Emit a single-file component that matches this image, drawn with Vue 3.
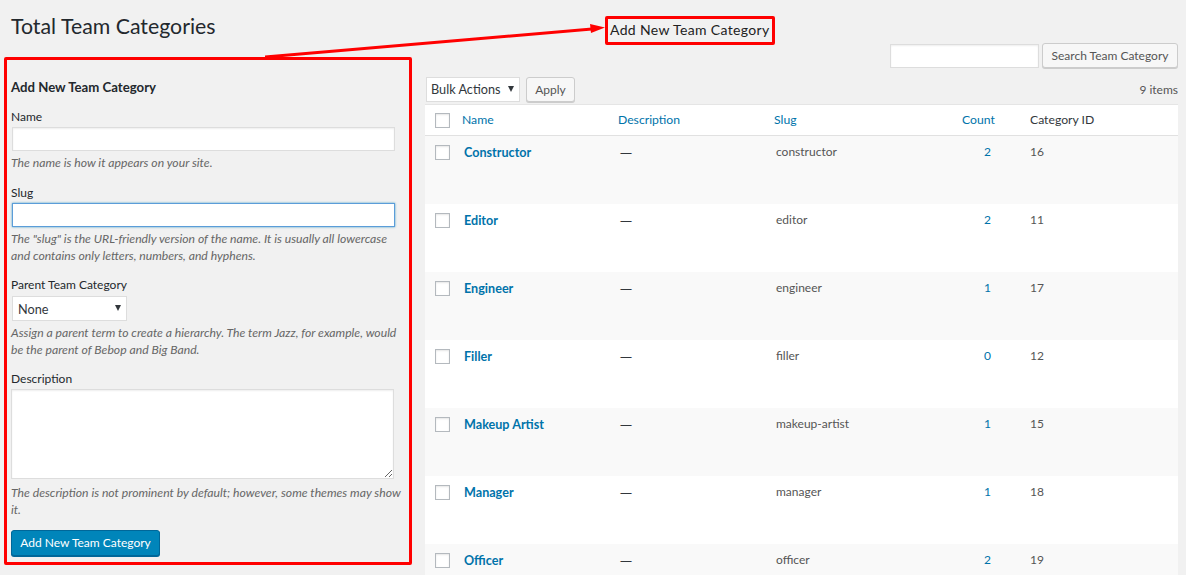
<script setup>
const terms = [
  { name: 'Constructor', slug: 'constructor', count: 2, id: 16 },
  { name: 'Editor', slug: 'editor', count: 2, id: 11 },
  { name: 'Engineer', slug: 'engineer', count: 1, id: 17 },
  { name: 'Filler', slug: 'filler', count: 0, id: 12 },
  { name: 'Makeup Artist', slug: 'makeup-artist', count: 1, id: 15 },
  { name: 'Manager', slug: 'manager', count: 1, id: 18 },
  { name: 'Officer', slug: 'officer', count: 2, id: 19 }
];
</script>

<template>
  <div class="wrap">
    <h1>Total Team Categories</h1>

    <div class="columns">
      <form class="col-left" @submit.prevent>
        <h2>Add New Team Category</h2>

        <div class="field name-field">
          <label>Name</label>
          <input type="text" />
          <p>The name is how it appears on your site.</p>
        </div>

        <div class="field slug-field">
          <label>Slug</label>
          <input type="text" class="focused" />
          <p>The "slug" is the URL-friendly version of the name. It is usually all lowercase and contains only letters, numbers, and hyphens.</p>
        </div>

        <div class="field parent-field">
          <label>Parent Team Category</label>
          <span class="select parent-select">
            <select><option>None</option></select>
          </span>
          <p>Assign a parent term to create a hierarchy. The term Jazz, for example, would be the parent of Bebop and Big Band.</p>
        </div>

        <div class="field desc-field">
          <label>Description</label>
          <textarea></textarea>
          <p>The description is not prominent by default; however, some themes may show it.</p>
        </div>

        <button class="primary">Add New Team Category</button>
      </form>

      <div class="col-right">
        <div class="search">
          <input type="text" />
          <button class="secondary">Search Team Category</button>
        </div>

        <div class="tablenav">
          <span class="select bulk-select">
            <select><option>Bulk Actions</option></select>
          </span>
          <button class="secondary apply">Apply</button>
          <span class="items">9 items</span>
        </div>

        <table>
          <thead>
            <tr>
              <th class="check"><span class="checkbox"></span></th>
              <th class="col-name"><a href="#">Name</a></th>
              <th class="col-desc"><a href="#">Description</a></th>
              <th class="col-slug"><a href="#">Slug</a></th>
              <th class="col-count"><a href="#">Count</a></th>
              <th>Category ID</th>
            </tr>
          </thead>
          <tbody>
            <tr v-for="term in terms" :key="term.id">
              <td class="check"><span class="checkbox"></span></td>
              <td class="col-name"><a href="#" class="term-name">{{ term.name }}</a></td>
              <td class="col-desc dash">—</td>
              <td class="col-slug">{{ term.slug }}</td>
              <td class="col-count"><a href="#">{{ term.count }}</a></td>
              <td>{{ term.id }}</td>
            </tr>
          </tbody>
        </table>
      </div>
    </div>

    <!-- red annotations on top of the screenshot -->
    <div class="mark mark-form"></div>
    <div class="mark mark-title">Add New Team Category</div>
    <svg class="arrow" width="1186" height="575" viewBox="0 0 1186 575">
      <polygon points="265,55.5 592,27.5 592,30.5 265,58.5" fill="#f00" />
      <polygon points="590,24 605,27.5 591,33" fill="#f00" />
    </svg>
  </div>
</template>

<style scoped>
.wrap {
  position: relative;
  height: 575px;
  overflow: hidden;
  padding: 0 8px 0 11px;
  box-sizing: border-box;
  background: #f1f1f1;
  color: #444;
  font-family: Lato, "Open Sans", sans-serif;
  font-size: 12.2px;
}

h1 {
  margin: 0;
  height: 43px;
  font-size: 21.3px;
  font-weight: 400;
  line-height: 53px;
  color: #23282d;
}

.columns {
  display: flex;
}

.col-left {
  width: 384px;
  flex: none;
  margin-right: 30px;
}

.col-right {
  width: 753px;
  flex: none;
}

h2 {
  margin: 35px 0 0;
  font-size: 13.2px;
  font-weight: 700;
  line-height: 18px;
  color: #23282d;
}

.field label {
  display: block;
  height: 19px;
  font-size: 12px;
  line-height: 18px;
  color: #23282d;
}

.field p {
  margin: 3px -12px 0 0;
  font-size: 12.2px;
  font-style: italic;
  line-height: 17px;
  color: #666;
}

.name-field { margin-top: 12px; }
.slug-field { margin-top: 13px; }
.parent-field { margin-top: 12px; }
.desc-field { margin-top: 12px; }

.parent-field label { height: 20px; }
.desc-field p { margin-top: 5px; }

input[type="text"],
textarea,
select {
  box-sizing: border-box;
  margin: 0;
  border: 1px solid #ddd;
  border-radius: 0;
  outline: none;
  background: #fff;
  font: inherit;
  color: #32373c;
  box-shadow: inset 0 1px 2px rgba(0, 0, 0, 0.07);
}

.field input {
  display: block;
  width: 383px;
  height: 24px;
  margin-left: 1px;
}

.field input.focused {
  border-color: #5b9dd9;
  box-shadow: 0 0 2px rgba(30, 140, 190, 0.8);
}

textarea {
  display: block;
  width: 383px;
  height: 90px;
  resize: vertical;
}

.select {
  position: relative;
  display: inline-block;
}

.select select {
  display: block;
  width: 100%;
  height: 100%;
  padding: 0 0 0 4px;
  appearance: none;
  font-size: 12.7px;
  box-shadow: none;
}

.select::after {
  content: "";
  position: absolute;
  top: 9px;
  right: 6px;
  border-top: 6px solid #32373c;
  border-left: 3.5px solid transparent;
  border-right: 3.5px solid transparent;
}

.parent-select {
  display: block;
  width: 115px;
  height: 25px;
  margin-left: 1px;
}

.parent-select select {
  padding-left: 5px;
}

.bulk-select {
  width: 94px;
  height: 25px;
}

button {
  box-sizing: border-box;
  height: 26px;
  border-radius: 3px;
  font: inherit;
  font-size: 12px;
  cursor: pointer;
}

.primary {
  display: block;
  width: 149px;
  margin-top: 12px;
  padding: 0 0 2px;
  border: 1px solid #006799;
  background: #0085ba;
  color: #fff;
  box-shadow: 0 1px 0 #006799;
}

.secondary {
  border: 1px solid #ccc;
  background: #f7f7f7;
  color: #555;
  box-shadow: 0 1px 0 #ccc;
}

.search {
  display: flex;
  justify-content: flex-end;
  align-items: center;
  gap: 3px;
}

.search input {
  width: 149px;
  height: 24px;
}

.search button {
  width: 136px;
  height: 25px;
  padding: 0;
}

.tablenav {
  display: flex;
  align-items: center;
  gap: 6px;
  margin: 8px 0 2px;
  height: 26px;
  padding-left: 1px;
}

.apply {
  width: 49px;
  height: 25px;
  padding: 0;
}

.items {
  margin-left: auto;
  font-size: 12px;
  color: #555;
}

table {
  width: 753px;
  border-collapse: collapse;
  table-layout: fixed;
  background: #fff;
  border-top: 1px solid #e5e5e5;
}

th {
  height: 31px;
  padding: 0 10px 1px;
  box-sizing: border-box;
  border-bottom: 1px solid #e1e1e1;
  font-weight: 400;
  text-align: left;
  color: #32373c;
}

td {
  height: 68px;
  box-sizing: border-box;
  padding: 7px 10px 0 12px;
  vertical-align: top;
  font-size: 12px;
  color: #555;
  line-height: 17px;
}

tbody tr:nth-child(odd) {
  background: #f9f9f9;
}

td:last-child {
  padding-left: 10px;
}

td.col-name,
td.dash {
  padding-top: 8px;
}

a {
  color: #0073aa;
  text-decoration: none;
}

.term-name {
  font-size: 12.6px;
  font-weight: 700;
}

.dash {
  font-family: "Open Sans", sans-serif;
  color: #32373c;
}

.check {
  width: 27px;
  padding: 0;
}

td.check {
  padding: 9px 0 0;
}

.checkbox {
  display: block;
  box-sizing: border-box;
  width: 15px;
  height: 15px;
  margin-left: 10px;
  border: 1px solid #b4b9be;
  background: #fff;
  box-shadow: inset 0 1px 2px rgba(0, 0, 0, 0.1);
}

.col-name,
.col-desc {
  width: 156px;
  box-sizing: border-box;
}

.col-slug {
  width: 156px;
  box-sizing: border-box;
}

.col-count {
  width: 100px;
  box-sizing: border-box;
  padding-left: 42px;
}

td.col-count {
  padding-right: 29px;
  text-align: right;
}

.mark {
  position: absolute;
  box-sizing: border-box;
  border: 3px solid #f00;
  border-radius: 2px;
}

.mark-form {
  left: 4px;
  top: 57px;
  width: 408px;
  height: 508px;
}

.mark-title {
  left: 605px;
  top: 16px;
  width: 170px;
  height: 29px;
  padding-left: 2px;
  font-size: 14px;
  line-height: 22px;
  letter-spacing: 0.35px;
  color: #222;
  white-space: nowrap;
}

.arrow {
  position: absolute;
  left: 0;
  top: 0;
  pointer-events: none;
}
</style>
